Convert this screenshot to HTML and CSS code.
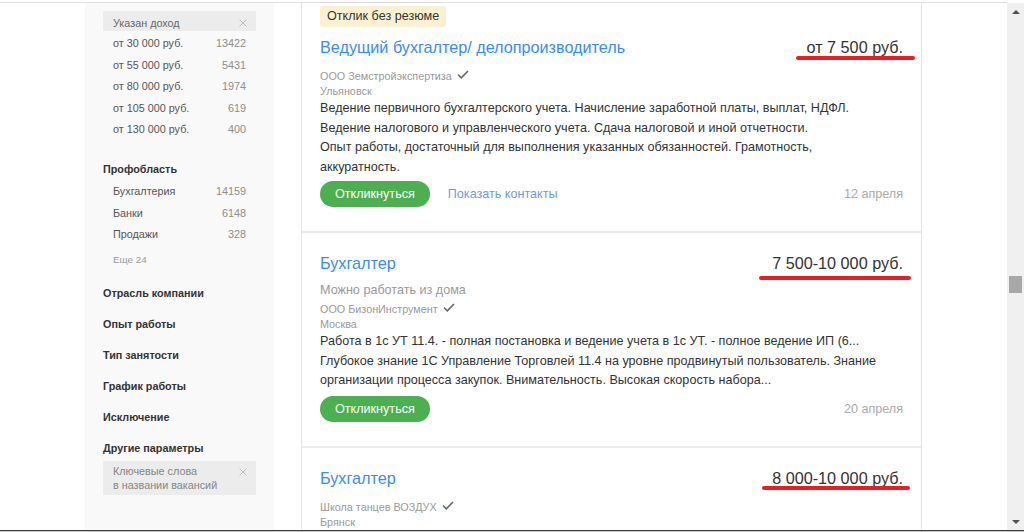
FILE: index.html
```html
<!DOCTYPE html>
<html lang="ru">
<head>
<meta charset="utf-8">
<title>Вакансии</title>
<link rel="stylesheet" href="styles.css">
</head>
<body>
<div class="topbar"></div>
<div class="frame">
  <div class="viewport">
    <aside class="sidebar">
      <div class="chip">
        <span>Указан доход</span>
        <svg class="chip-x" viewBox="0 0 8 8" width="8" height="8"><path d="M0.5 0.5 L7.5 7.5 M7.5 0.5 L0.5 7.5"/></svg>
      </div>
      <ul class="opts">
        <li class="opt"><span>от 30 000 руб.</span><span class="cnt">13422</span></li>
        <li class="opt"><span>от 55 000 руб.</span><span class="cnt">5431</span></li>
        <li class="opt"><span>от 80 000 руб.</span><span class="cnt">1974</span></li>
        <li class="opt"><span>от 105 000 руб.</span><span class="cnt">619</span></li>
        <li class="opt"><span>от 130 000 руб.</span><span class="cnt">400</span></li>
      </ul>
      <div class="sec sec--first">Профобласть</div>
      <ul class="opts opts--sec">
        <li class="opt"><span>Бухгалтерия</span><span class="cnt">14159</span></li>
        <li class="opt"><span>Банки</span><span class="cnt">6148</span></li>
        <li class="opt"><span>Продажи</span><span class="cnt">328</span></li>
      </ul>
      <div class="more">Еще 24</div>
      <div class="sec">Отрасль компании</div>
      <div class="sec">Опыт работы</div>
      <div class="sec">Тип занятости</div>
      <div class="sec">График работы</div>
      <div class="sec">Исключение</div>
      <div class="sec">Другие параметры</div>
      <div class="chip chip--multi">
        <span>Ключевые слова<br>в названии вакансий</span>
        <svg class="chip-x" viewBox="0 0 8 8" width="8" height="8"><path d="M0.5 0.5 L7.5 7.5 M7.5 0.5 L0.5 7.5"/></svg>
      </div>
    </aside>

    <main class="results">
      <article class="card card--first">
        <div class="badge">Отклик без резюме</div>
        <div class="head">
          <a class="title">Ведущий бухгалтер/ делопроизводитель</a>
          <span class="salary">от 7 500 руб.<span class="mark mark--1"></span></span>
        </div>
        <div class="company">ООО Земстройэкспертиза<svg class="check" viewBox="0 0 12 9" width="12" height="9"><path d="M1 4.5 L4.3 7.8 L11 1"/></svg></div>
        <div class="city">Ульяновск</div>
        <p class="desc">Ведение первичного бухгалтерского учета. Начисление заработной платы, выплат, НДФЛ.<br>Ведение налогового и управленческого учета. Сдача налоговой и иной отчетности.<br>Опыт работы, достаточный для выполнения указанных обязанностей. Грамотность,<br>аккуратность.</p>
        <div class="actions">
          <button class="btn">Откликнуться</button>
          <a class="contacts">Показать контакты</a>
          <span class="date">12 апреля</span>
        </div>
      </article>

      <article class="card">
        <div class="head">
          <a class="title">Бухгалтер</a>
          <span class="salary">7 500-10 000 руб.<span class="mark mark--2"></span></span>
        </div>
        <div class="sub">Можно работать из дома</div>
        <div class="company">ООО БизонИнструмент<svg class="check" viewBox="0 0 12 9" width="12" height="9"><path d="M1 4.5 L4.3 7.8 L11 1"/></svg></div>
        <div class="city">Москва</div>
        <p class="desc">Работа в 1с УТ 11.4. - полная постановка и ведение учета в 1с УТ. - полное ведение ИП (6...<br>Глубокое знание 1С Управление Торговлей 11.4 на уровне продвинутый пользователь. Знание<br>организации процесса закупок. Внимательность. Высокая скорость набора...</p>
        <div class="actions">
          <button class="btn">Откликнуться</button>
          <span class="date">20 апреля</span>
        </div>
      </article>

      <article class="card">
        <div class="head">
          <a class="title">Бухгалтер</a>
          <span class="salary">8 000-10 000 руб.<span class="mark mark--3"></span></span>
        </div>
        <div class="company">Школа танцев ВОЗДУХ<svg class="check" viewBox="0 0 12 9" width="12" height="9"><path d="M1 4.5 L4.3 7.8 L11 1"/></svg></div>
        <div class="city">Брянск</div>
      </article>
    </main>
  </div>
  <div class="scrollbar">
    <div class="sb-btn"><span class="tri tri--up"></span></div>
    <div class="sb-track"><div class="sb-thumb"></div></div>
    <div class="sb-btn"><span class="tri tri--down"></span></div>
  </div>
</div>
<div class="taskbar"></div>
</body>
</html>
```

FILE: styles.css
```css
* { box-sizing: border-box; }

html, body {
  margin: 0;
  padding: 0;
}

body {
  width: 1024px;
  height: 532px;
  overflow: hidden;
  background: #fff;
  font-family: "Liberation Sans", Arial, sans-serif;
  color: #333;
}

.topbar {
  width: 1007px;
  height: 3px;
  border-bottom: 1px solid #dedede;
}

.frame {
  display: flex;
  height: 527px;
}

.viewport {
  flex: 1;
  display: flex;
  padding-left: 85px;
  overflow: hidden;
}

/* ---------- sidebar ---------- */
.sidebar {
  width: 189px;
  flex: none;
  background: #f9f9f9;
  padding: 8px 18px 0;
}

.chip {
  display: flex;
  justify-content: space-between;
  align-items: flex-start;
  background: #ececec;
  padding: 4px 9px 0 10px;
  height: 20px;
  font-size: 10.8px;
  line-height: 16px;
  color: #686868;
}

.chip--multi {
  height: auto;
  margin-top: 5px;
  padding: 3px 9px 3px 10px;
  line-height: 14px;
  color: #858585;
}

.chip-x {
  flex: none;
  margin-top: 4px;
  fill: none;
  stroke: #bdbdbd;
  stroke-width: 1;
}

.opts {
  list-style: none;
  margin: 2px 0 0;
  padding: 0 10px;
}

.opts--sec {
  margin-top: 4px;
}

.opt {
  display: flex;
  justify-content: space-between;
  font-size: 10.8px;
  line-height: 21.6px;
  color: #555;
}

.cnt {
  color: #8c8c8c;
}

.sec {
  margin-top: 15px;
  font-size: 10.8px;
  font-weight: bold;
  line-height: 16px;
  color: #333;
}

.sec--first {
  margin-top: 20px;
}

.more {
  margin-top: 3px;
  padding-left: 10px;
  font-size: 9.9px;
  line-height: 21.6px;
  color: #999;
}

/* ---------- results ---------- */
.results {
  flex: none;
  margin-left: 27px;
  width: 621px;
  border-left: 1px solid #e6e6e6;
  border-right: 1px solid #e6e6e6;
}

.card {
  padding: 19px 18px 24px 18px;
  border-bottom: 2px solid #ebebeb;
}

.card--first {
  padding-top: 3px;
}

.badge {
  width: fit-content;
  height: 21px;
  padding: 0 7px;
  border-radius: 3px;
  background: #fbf1d0;
  font-size: 12.6px;
  line-height: 21px;
  color: #333;
}

.head {
  display: flex;
  justify-content: space-between;
  align-items: baseline;
  line-height: 22px;
  font-size: 16.2px;
}

.badge + .head {
  margin-top: 9px;
}

.title {
  color: #3a8cf4;
  text-decoration: none;
}

.salary {
  position: relative;
  color: #333;
}

.mark {
  position: absolute;
  height: 4px;
  border-radius: 2px;
  background: #ec1c24;
}

.mark--1 { left: -11px; right: -12px; top: 20px; }
.mark--2 { left: -13px; right: -8px; top: 24px; }
.mark--3 { left: -10px; right: -7px; top: 19px; }

.sub {
  margin-top: 7px;
  font-size: 12.6px;
  line-height: 18px;
  color: #999;
}

.company {
  margin-top: 10px;
  font-size: 10.8px;
  line-height: 16px;
  color: #999;
}

.sub + .company {
  margin-top: 2px;
}

.check {
  margin-left: 5px;
  vertical-align: 1px;
  fill: none;
  stroke: #666;
  stroke-width: 1.6;
}

.city {
  font-size: 10.8px;
  line-height: 15px;
  color: #999;
}

.desc {
  margin: 0;
  font-size: 12.6px;
  line-height: 19.5px;
  color: #333;
}

.actions {
  display: flex;
  align-items: center;
  margin-top: 4px;
  height: 26px;
  font-size: 12.6px;
}

.sub ~ .actions {
  margin-top: 5px;
}

.btn {
  height: 26px;
  padding: 0 15px;
  border: none;
  border-radius: 13px;
  background: #4caf50;
  color: #fff;
  font-family: inherit;
  font-size: 12.6px;
}

.contacts {
  margin-left: 18px;
  color: #6c9de4;
}

.date {
  margin-left: auto;
  color: #aaa;
}

/* ---------- scrollbar ---------- */
.scrollbar {
  width: 17px;
  flex: none;
  display: flex;
  flex-direction: column;
  background: #f0f0f0;
}

.sb-btn {
  height: 17px;
  display: flex;
  align-items: center;
  justify-content: center;
}

.tri {
  width: 0;
  height: 0;
  border-left: 4px solid transparent;
  border-right: 4px solid transparent;
}

.tri--up { border-bottom: 4px solid #505050; }
.tri--down { border-top: 4px solid #505050; }

.sb-track {
  flex: 1;
  padding: 0 2px;
}

.sb-thumb {
  margin-top: 256px;
  height: 17px;
  background: #a8a8a8;
}

.taskbar {
  height: 2px;
  border-top: 1px solid #3c3c3c;
  background: #c4c4c4;
}
```
